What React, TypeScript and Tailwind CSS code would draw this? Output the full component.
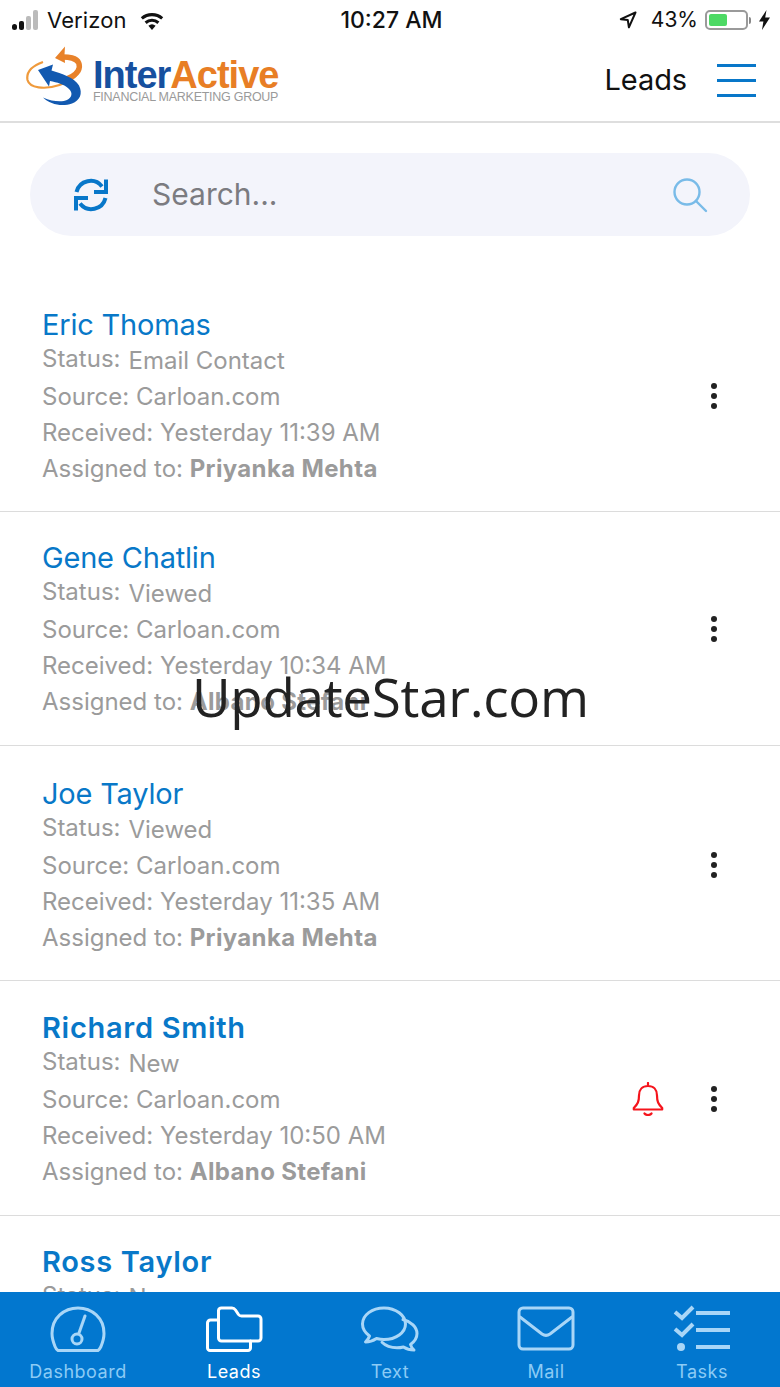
import type { ReactNode } from "react";

type Lead = {
  name: string;
  status: string;
  received: string;
  assigned: string;
  rowClass: string;
  unread?: boolean;
  alert?: boolean;
};

const leads: Lead[] = [
  { name: "Eric Thomas", status: "Email Contact", received: "Yesterday 11:39 AM", assigned: "Priyanka Mehta", rowClass: "h-[234px] pt-[29px]" },
  { name: "Gene Chatlin", status: "Viewed", received: "Yesterday 10:34 AM", assigned: "Albano Stefani", rowClass: "h-[234px] pt-[28px]" },
  { name: "Joe Taylor", status: "Viewed", received: "Yesterday 11:35 AM", assigned: "Priyanka Mehta", rowClass: "h-[235px] pt-[30px]" },
  { name: "Richard Smith", status: "New", received: "Yesterday 10:50 AM", assigned: "Albano Stefani", rowClass: "h-[235px] pt-[29px]", unread: true, alert: true },
  { name: "Ross Taylor", status: "New", received: "Yesterday 10:42 AM", assigned: "Albano Stefani", rowClass: "h-[235px] pt-[28px]", unread: true },
];

function StatusBar() {
  return (
    <div className="flex h-[40px] shrink-0 items-center justify-between pl-[12px] pr-[10px] text-[22px] text-[#111]">
      <div className="flex w-[200px] items-center">
        <div className="flex items-end gap-[2px]">
          <span className="h-[6px] w-[5px] rounded-full bg-[#111]" />
          <span className="h-[9px] w-[5px] rounded-[2px] bg-[#111]" />
          <span className="h-[14px] w-[5px] rounded-[2px] bg-[#bbb]" />
          <span className="h-[20px] w-[5px] rounded-[2px] bg-[#bbb]" />
        </div>
        <span className="ml-[9px] tracking-[0.1px]">Verizon</span>
        <svg width="26" height="19" viewBox="0 0 26 19" className="ml-[12px]" fill="#111">
          <path d="M13 19l-3.600-4.200a5.400 5.400 0 0 1 7.200 0z" />
          <path d="M5.600 10.600a11.200 11.200 0 0 1 14.800 0l-2 2.300a8.200 8.200 0 0 0-10.800 0z" />
          <path d="M1.800 6.300a17 17 0 0 1 22.400 0L22.200 8.600a14 14 0 0 0-18.400 0z" />
        </svg>
      </div>
      <span className="ml-[1px] text-[23px] font-medium">10:27 AM</span>
      <div className="flex w-[200px] items-center justify-end">
        <svg width="18" height="18" viewBox="0 0 18 18" fill="none" stroke="#111" strokeWidth="2" strokeLinejoin="round">
          <path d="M16.500 1.500L1.800 8.200l7 .9 1.100 7.200z" />
        </svg>
        <span className="ml-[14px] text-[21px]">43%</span>
        <div className="ml-[7px] flex h-[20px] w-[43px] items-center rounded-[5px] border-2 border-[#9a9a9a] p-[2px]">
          <div className="h-full w-[18px] rounded-[2px] bg-[#4cd964]" />
        </div>
        <span className="ml-[1px] h-[7px] w-[2px] rounded-r-full bg-[#888]" />
        <svg width="11" height="20" viewBox="0 0 11 20" className="ml-[8px]" fill="#111">
          <path d="M7.500 0L0 11.500h4.400L3 20l8-12.400H6.200z" />
        </svg>
      </div>
    </div>
  );
}

function Logo() {
  return (
    <div className="flex items-center">
      <svg width="66" height="62" viewBox="25 45 66 62" fill="none" className="-translate-y-[5px]">
        <path d="M43 62C32 66 26 72 27.500 80c2 8 17 10 32 5 9-3 16-7 19-13 3-7 1-12-6-14-3-1-6-1.500-9-1.500" stroke="#ef9a3c" strokeWidth="2.200" />
        <path d="M64 80c6-2 11-4 14-9 3-6 1-11-6-13-3-.8-6-1-9-1" stroke="#e8822a" strokeWidth="5.500" />
        <path d="M55 58l10-11.500-.5 8 .5 8.500z" fill="#e8822a" />
        <path d="M38 70l15-5.500-1.500 6c10 3 23 7 27.500 15 4 8 1 15-7 18-10 3.500-22 1-29-6 9 4 19 5 24 2.500 5-2.500 6-7 2-11-5-5-12-6.500-19-8l-1 5.500z" fill="#1259b0" />
      </svg>
      <div className="ml-[2px] flex flex-col font-['Liberation_Sans',sans-serif]">
        <div className="text-[38px] leading-[36px] font-bold tracking-[-1px]">
          <span className="text-[#16509f]">Inter</span>
          <span className="text-[#e87e25]">Active</span>
        </div>
        <div className="-mt-[2px] text-[12.500px] leading-[13px] tracking-[-0.27px] whitespace-nowrap text-[#9a9a9a]">
          FINANCIAL MARKETING GROUP
        </div>
      </div>
    </div>
  );
}

function Header() {
  return (
    <header className="flex h-[83px] shrink-0 items-center justify-between border-b-2 border-[#dedede] pl-[25px] pr-[24px]">
      <Logo />
      <div className="flex items-center">
        <span className="-mt-[2px] text-[29px] tracking-[-0.1px] text-[#111]">Leads</span>
        <div className="ml-[30px] flex w-[39px] flex-col gap-[12px]">
          <span className="h-[3px] bg-[#0877c9]" />
          <span className="h-[3px] bg-[#0877c9]" />
          <span className="h-[3px] bg-[#0877c9]" />
        </div>
      </div>
    </header>
  );
}

function SearchBar() {
  return (
    <div className="mx-[30px] mt-[30px] flex h-[83px] shrink-0 items-center rounded-full bg-[#f3f4fb] pl-[43px] pr-[42px]">
      <svg width="36" height="36" viewBox="0 0 36 36" fill="none" stroke="#0877c9" strokeWidth="4">
        <path d="M3.500 15A14.500 14.500 0 0 1 29 9.500" />
        <path d="M33 2.500V15H21" strokeLinejoin="miter" />
        <path d="M32.500 21A14.500 14.500 0 0 1 7 26.500" />
        <path d="M3 33.500V21h12" strokeLinejoin="miter" />
      </svg>
      <span className="ml-[43px] flex-1 text-[30px] text-[#7b7b80]">Search...</span>
      <svg width="36" height="36" viewBox="0 0 36 36" fill="none" stroke="#79bbe8" strokeWidth="2.400">
        <circle cx="15" cy="15" r="12.500" />
        <path d="M24 24l10 10" strokeLinecap="round" />
      </svg>
    </div>
  );
}

function Bell() {
  return (
    <svg width="32" height="34" viewBox="0 0 32 34" fill="none" stroke="#f5141c" strokeWidth="2.200" strokeLinejoin="round" strokeLinecap="round">
      <path d="M16 1v3M16 4c-5.500 0-9 3.600-9 9.500 0 6-1.200 8.500-5.200 12.500v1.500h28.400V26c-4-4-5.200-6.500-5.200-12.500C25 7.600 21.500 4 16 4z" />
      <path d="M12.500 31.500c1.500 2 5.500 2 7 0" />
    </svg>
  );
}

function Dots() {
  return (
    <div className="flex flex-col gap-[4px]">
      <span className="size-[6px] rounded-full bg-[#222]" />
      <span className="size-[6px] rounded-full bg-[#222]" />
      <span className="size-[6px] rounded-full bg-[#222]" />
    </div>
  );
}

function LeadRow({ lead }: { lead: Lead }) {
  return (
    <div className={`flex shrink-0 border-b border-[#dcdcdc] pr-[63px] pl-[42px] ${lead.rowClass}`}>
      <div className="flex-1 text-[24px] leading-[36px] text-[#9b9b9b]">
        {lead.unread ? (
          <div className="text-[29px] font-semibold tracking-[0.7px] text-[#0878c8]">{lead.name}</div>
        ) : (
          <div className="text-[29px] tracking-[-0.2px] text-[#0878c8]">{lead.name}</div>
        )}
        <div className="flex">
          <span className="-mt-[2px]">Status:</span>
          <span className="ml-[8px]">{lead.status}</span>
        </div>
        <div>Source: Carloan.com</div>
        <div>Received: {lead.received}</div>
        <div>
          Assigned to: <span className="font-bold tracking-[0.35px]">{lead.assigned}</span>
        </div>
      </div>
      <div className="flex h-[177px] items-center">
        {lead.alert ? (
          <div className="mr-[47px]">
            <Bell />
          </div>
        ) : null}
        <Dots />
      </div>
    </div>
  );
}

function TabItem({ label, active, children }: { label: string; active?: boolean; children: ReactNode }) {
  return (
    <div className={`flex flex-1 flex-col items-center pt-[12px] ${active ? "text-white" : "text-[#a9d6f7]"}`}>
      <div className="flex h-[50px] items-center">{children}</div>
      <span className={`mt-[5px] text-[18px] leading-[26px] tracking-[0.5px] ${active ? "" : "text-[#8ccbf5]"}`}>{label}</span>
    </div>
  );
}

function TabBar() {
  const stroke = { fill: "none", stroke: "currentColor", strokeWidth: 3, strokeLinecap: "round" as const, strokeLinejoin: "round" as const };
  return (
    <nav className="flex h-[95px] shrink-0 bg-[#0277cf]">
      <TabItem label="Dashboard">
        <svg width="58" height="46" viewBox="0 0 58 46" {...stroke}>
          <path d="M9 44.500h40c1.500-1 2-2 3-4 2-5 3-9 3-13C55 12 43 2 29 2S3 12 3 27.500c0 4 1 8 3 13 .8 2 1.500 3 3 4z" />
          <circle cx="28" cy="33" r="5" />
          <path d="M30 27l6-17" />
        </svg>
      </TabItem>
      <TabItem label="Leads" active>
        <svg width="58" height="46" viewBox="0 0 58 46" {...stroke}>
          <path d="M13.500 14H5.500A3 3 0 0 0 2.500 17v25a2.500 2.500 0 0 0 2.500 2.500h38a2.500 2.500 0 0 0 2.500-2.500v-7" />
          <path d="M13.500 4.500A3 3 0 0 1 16.500 2H27c1.500 0 2.500.6 3.500 2l3 4.500c.7 1 1.500 1.500 3 1.500H53a3 3 0 0 1 3 3v19a3 3 0 0 1-3 3H16.500a3 3 0 0 1-3-3z" />
        </svg>
      </TabItem>
      <TabItem label="Text">
        <svg width="60" height="46" viewBox="0 0 60 46" {...stroke}>
          <path d="M24 2C12 2 2.500 9 2.500 18c0 5 3 9 7 12-.6 2-2 4-4 6 4 0 8-1.500 11-3.500 2.500.6 5 1 7.500 1 12 0 21.500-7 21.500-15.500S36 2 24 2z" />
          <path d="M43 13.500c8 2 14 7.500 14 14 0 5-3 8.500-6.500 11 .5 2 1.800 4 3.500 5.500-3.500 0-7.500-1-10.500-3-2 .5-4.500.8-6.500.8-6 0-11.500-2-15-5.500" />
        </svg>
      </TabItem>
      <TabItem label="Mail">
        <svg width="58" height="46" viewBox="0 0 58 46" {...stroke}>
          <rect x="2" y="2" width="54" height="41" rx="4" />
          <path d="M3 11l22 17c2.500 1.700 5.500 1.700 8 0l22-17" />
        </svg>
      </TabItem>
      <TabItem label="Tasks">
        <svg width="58" height="48" viewBox="0 0 58 48" {...stroke} className="-mt-[1px]">
          <path d="M2 7l7 6L20 2" strokeWidth="4" strokeLinecap="butt" strokeLinejoin="miter" />
          <path d="M2 24l7 6 11-11" strokeWidth="4" strokeLinecap="butt" strokeLinejoin="miter" />
          <circle cx="8" cy="42" r="4" fill="currentColor" stroke="none" />
          <path d="M23 8h34M23 25h34M23 42h34" strokeWidth="4" strokeLinecap="butt" />
        </svg>
      </TabItem>
    </nav>
  );
}

export default function App() {
  return (
    <div className="relative flex h-[1387px] w-[780px] flex-col overflow-hidden bg-white font-['Inter',sans-serif]">
      <StatusBar />
      <Header />
      <main className="flex min-h-0 flex-1 flex-col overflow-hidden">
        <SearchBar />
        <div className="mt-[42px] flex flex-col">
          {leads.map((lead) => (
            <LeadRow key={lead.name} lead={lead} />
          ))}
        </div>
      </main>
      <TabBar />
      <div className="absolute top-[662px] left-[192px] font-['Open_Sans',sans-serif] text-[53px] leading-[70px] tracking-[-0.3px] text-[#222]">
        UpdateStar.com
      </div>
    </div>
  );
}
